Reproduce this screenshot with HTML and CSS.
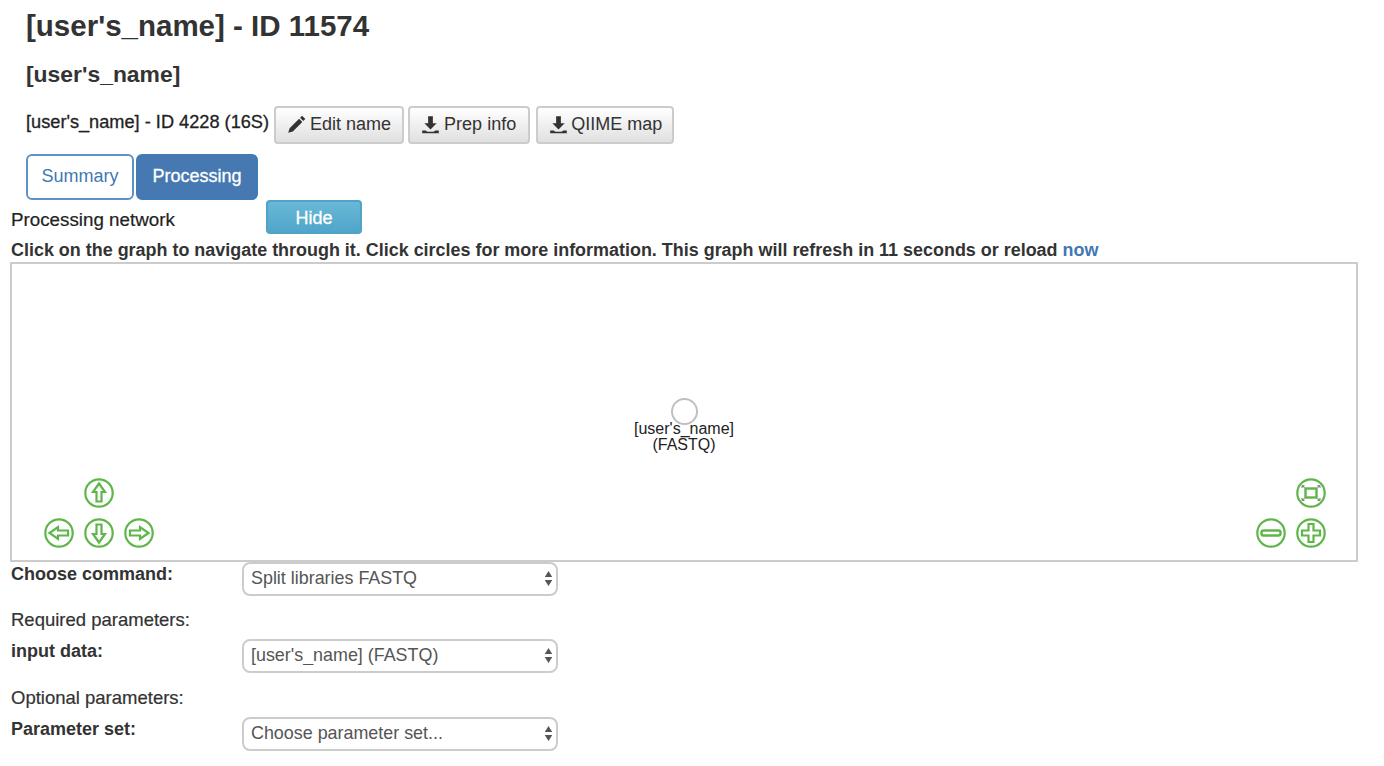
FILE: index.html
```html
<!DOCTYPE html>
<html lang="en">
<head>
    <meta charset="UTF-8">
    <meta name="viewport" content="width=device-width, initial-scale=1.0">
    <title>[user's_name] - ID 11574</title>
    <link rel="stylesheet" href="styles.css">
</head>
<body>
    <div class="header">
        <h1>[user's_name] - ID 11574</h1>
        <h3>[user's_name]</h3>
        <div class="prep-row">
            <b class="prep-title">[user's_name] - ID 4228 (16S)</b>
            <button class="btn">
                <svg class="glyph" viewBox="0 0 16 16"><path d="M12.700.6l2.700 2.700-1.700 1.700-2.700-2.700zM10.200 3.100l2.700 2.700-8 8-3.900 1.200 1.200-3.900z"/></svg>
                Edit name
            </button>
            <button class="btn btn-prep">
                <svg class="glyph" viewBox="0 0 16 16"><path d="M6 1h4v6h3.200L8 12.200 2.800 7H6zM1 13h2.800l1.700 1h5l1.700-1H15v2.400H1z"/></svg>
                Prep info
            </button>
            <button class="btn btn-map">
                <svg class="glyph" viewBox="0 0 16 16"><path d="M6 1h4v6h3.200L8 12.200 2.800 7H6zM1 13h2.800l1.700 1h5l1.700-1H15v2.400H1z"/></svg>
                QIIME map
            </button>
        </div>
        <div class="tabs">
            <button class="tab">Summary</button>
            <button class="tab active">Processing</button>
        </div>
    </div>

    <div class="network">
        <div class="network-head">
            <span class="network-title">Processing network</span>
            <button class="btn-hide">Hide</button>
        </div>
        <div class="network-note">Click on the graph to navigate through it. Click circles for more information. This graph will refresh in 11 seconds or reload <a href="#">now</a></div>
        <div class="graph">
            <div class="node">
                <div class="node-circle"></div>
                <div class="node-label">[user's_name]<br>(FASTQ)</div>
            </div>

            <svg class="nav nav-up" viewBox="0 0 30 30"><circle cx="15" cy="15" r="13.700"/><path d="M15 5.500l6 8.500h-3.500v9.500h-5V14H9z"/></svg>
            <svg class="nav nav-left" viewBox="0 0 30 30"><circle cx="15" cy="15" r="13.700"/><path d="M5.500 15l8.500-6v3.500h10v5H14V21z"/></svg>
            <svg class="nav nav-down" viewBox="0 0 30 30"><circle cx="15" cy="15" r="13.700"/><path d="M15 24.500l-6-8.500h3.500V6.500h5V16H21z"/></svg>
            <svg class="nav nav-right" viewBox="0 0 30 30"><circle cx="15" cy="15" r="13.700"/><path d="M24.500 15L16 21v-3.500H6v-5h10V9z"/></svg>

            <svg class="nav nav-fit" viewBox="0 0 30 30">
                <circle cx="15" cy="15" r="13.700"/>
                <rect x="9.500" y="10.500" width="11" height="9"/>
                <path class="corner" d="M6 7.500l2.500 2M6 7.500h2.500M6 7.500V10M24 7.500l-2.500 2M24 7.500h-2.500M24 7.500V10M6 22.500l2.500-2M6 22.500h2.500M6 22.500V20M24 22.500l-2.500-2M24 22.500h-2.500M24 22.500V20"/>
            </svg>
            <svg class="nav nav-minus" viewBox="0 0 30 30"><circle cx="15" cy="15" r="13.700"/><rect x="5.500" y="12.500" width="19" height="5" rx="2"/></svg>
            <svg class="nav nav-plus" viewBox="0 0 30 30"><circle cx="15" cy="15" r="13.700"/><path d="M12.500 6h5v6.500H24v5h-6.500V24h-5v-6.500H6v-5h6.500z"/></svg>
        </div>
    </div>

    <form class="command-form">
        <div class="form-row">
            <label for="command">Choose command:</label>
            <div class="select-wrap">
                <select id="command"><option>Split libraries FASTQ</option></select>
                <svg class="select-arrows" viewBox="0 0 8 14"><path d="M4 0l3.500 5.500h-7zM4 14L.5 8.500h7z"/></svg>
            </div>
        </div>
        <div class="form-heading">Required parameters:</div>
        <div class="form-row">
            <label for="input-data">input data:</label>
            <div class="select-wrap">
                <select id="input-data"><option>[user's_name] (FASTQ)</option></select>
                <svg class="select-arrows" viewBox="0 0 8 14"><path d="M4 0l3.500 5.500h-7zM4 14L.5 8.500h7z"/></svg>
            </div>
        </div>
        <div class="form-heading optional">Optional parameters:</div>
        <div class="form-row">
            <label for="param-set">Parameter set:</label>
            <div class="select-wrap">
                <select id="param-set"><option>Choose parameter set...</option></select>
                <svg class="select-arrows" viewBox="0 0 8 14"><path d="M4 0l3.500 5.500h-7zM4 14L.5 8.500h7z"/></svg>
            </div>
        </div>
    </form>
</body>
</html>
```

FILE: styles.css
```css
* {
    box-sizing: border-box;
}
body {
    font-family: "Liberation Sans", Arial, sans-serif;
    font-size: 16px;
    margin: 0;
    padding: 0;
    background-color: #ffffff;
    color: #333333;
    overflow: hidden;
}
.header {
    padding: 0 0 0 26px;
}
h1 {
    font-size: 29.500px;
    font-weight: 700;
    line-height: 32px;
    margin: 0;
    padding-top: 10px;
    color: #333333;
}
h3 {
    font-size: 22.900px;
    font-weight: 700;
    line-height: 28px;
    margin: 18px 0 0;
    color: #333333;
}
.prep-row {
    display: flex;
    align-items: flex-start;
    margin-top: 18px;
    height: 38px;
}
.prep-title {
    font-size: 18.200px;
    font-weight: 400;
    -webkit-text-stroke: 0.3px #222222;
    line-height: 30px;
    margin-top: 1px;
    margin-right: 5px;
    color: #222222;
}
.btn {
    display: flex;
    align-items: center;
    gap: 4px;
    height: 38px;
    padding: 0 11px 2px;
    margin-right: 4px;
    font-family: inherit;
    font-size: 18px;
    color: #333333;
    background: linear-gradient(to bottom, #ffffff, #e0e0e0);
    border: 2px solid #cccccc;
    border-radius: 4px;
}
.btn-prep {
    padding-right: 12px;
}
.btn-map {
    gap: 3px;
    margin-left: 2px;
    padding-right: 10px;
}
.glyph {
    width: 19px;
    height: 19px;
    fill: #333333;
}
.tabs {
    display: flex;
    gap: 2px;
    margin-top: 10px;
}
.tab {
    height: 46px;
    width: 108px;
    padding-bottom: 3px;
    font-family: inherit;
    font-size: 18px;
    color: #3f78b3;
    background-color: #ffffff;
    border: 2px solid #5d92c8;
    border-radius: 6px;
}
.tab.active {
    width: 122px;
    color: #ffffff;
    -webkit-text-stroke: 0.3px #ffffff;
    background-color: #4679b2;
    border-color: #427ab3;
}
.network {
    margin-left: 10px;
    width: 1348px;
}
.network-head {
    display: flex;
    align-items: flex-start;
    height: 34px;
}
.network-title {
    width: 256px;
    margin-top: 9px;
    padding-left: 1px;
    font-size: 18.800px;
    line-height: 22px;
    color: #222222;
    -webkit-text-stroke: 0.2px #222222;
}
.btn-hide {
    width: 96px;
    height: 34px;
    padding-top: 4px;
    font-family: inherit;
    font-size: 18px;
    color: #ffffff;
    -webkit-text-stroke: 0.3px #ffffff;
    background: linear-gradient(to bottom, #68b8d8, #50a5c9);
    border: 2px solid #4fa3c6;
    border-radius: 4px;
}
.network-note {
    margin-top: 4px;
    padding-left: 1px;
    font-size: 17.960px;
    font-weight: 700;
    line-height: 24px;
    height: 24px;
    white-space: nowrap;
    color: #333333;
}
.network-note a {
    color: #3f78b3;
    text-decoration: none;
}
.graph {
    position: relative;
    height: 300px;
    border: 2px solid #cccccc;
}
.node {
    position: absolute;
    left: 602px;
    top: 134px;
    width: 140px;
    text-align: center;
}
.node-circle {
    width: 27px;
    height: 27px;
    margin: 0 auto;
    border: 2px solid #bfbfbf;
    border-radius: 50%;
    background-color: #ffffff;
}
.node-label {
    margin-top: -4px;
    font-size: 16px;
    line-height: 16px;
    color: #222222;
}
.nav {
    position: absolute;
    width: 30px;
    height: 30px;
}
.nav circle,
.nav path,
.nav rect {
    fill: none;
    stroke: #5fb648;
    stroke-width: 2.200;
}
.nav rect {
    stroke-width: 2.400;
}
.nav .corner {
    stroke: #888888;
    stroke-width: 1.100;
}
.nav-up { left: 72px; top: 214px; }
.nav-left { left: 32px; top: 254px; }
.nav-down { left: 72px; top: 254px; }
.nav-right { left: 112px; top: 254px; }
.nav-fit { left: 1284px; top: 214px; }
.nav-minus { left: 1244px; top: 254px; }
.nav-plus { left: 1284px; top: 254px; }
.command-form {
    margin-left: 11px;
}
.form-row {
    display: flex;
    align-items: flex-start;
}
.form-row label {
    width: 231px;
    font-size: 18px;
    font-weight: 700;
    line-height: 22px;
    padding-top: 1px;
    color: #333333;
}
.form-heading {
    font-size: 18.500px;
    line-height: 22px;
    height: 22px;
    margin-top: 13px;
    margin-bottom: 8px;
    color: #333333;
    -webkit-text-stroke: 0.2px #333333;
}
.form-heading.optional {
    margin-top: 14px;
}
.select-wrap {
    position: relative;
    width: 316px;
    height: 34px;
}
.select-wrap select {
    appearance: none;
    width: 100%;
    height: 34px;
    padding: 0 22px 3px 7px;
    font-family: inherit;
    font-size: 17.900px;
    color: #555555;
    background-color: #ffffff;
    border: 2px solid #cccccc;
    border-radius: 8px;
}
.select-arrows {
    position: absolute;
    right: 5px;
    top: 9px;
    width: 9px;
    height: 15px;
    fill: #555555;
}
```
